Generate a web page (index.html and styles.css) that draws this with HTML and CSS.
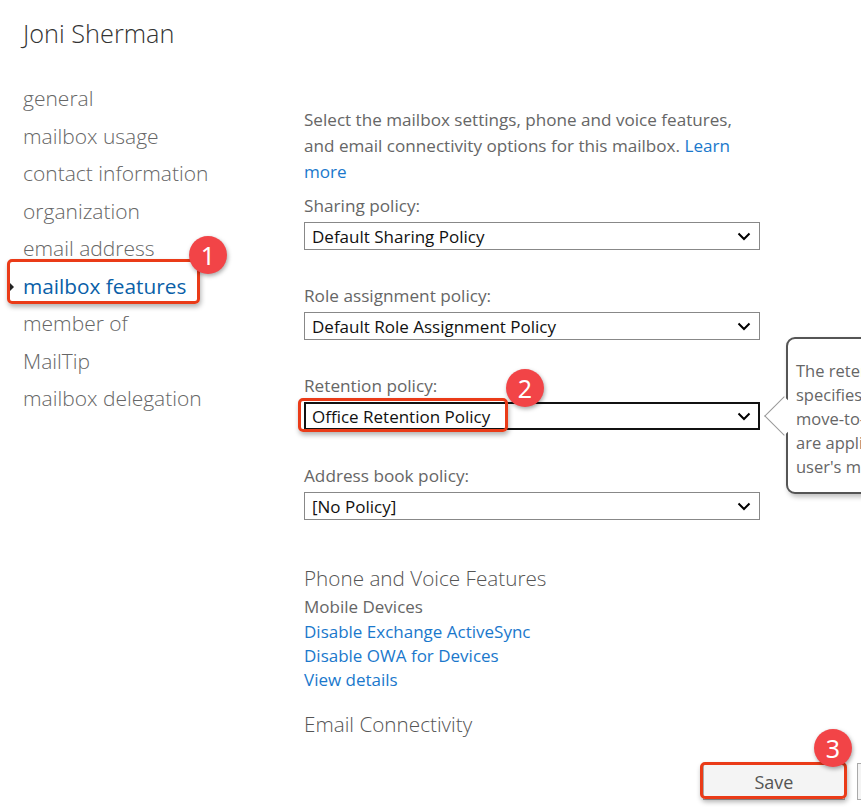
FILE: index.html
```html
<!DOCTYPE html>
<html>
<head>
<meta charset="utf-8">
<link rel="stylesheet" href="styles.css">
</head>
<body>
<div class="page">
  <h1 class="title">Joni Sherman</h1>
  <div class="columns">
    <nav class="nav">
      <div class="nav-item">general</div>
      <div class="nav-item">mailbox usage</div>
      <div class="nav-item">contact information</div>
      <div class="nav-item">organization</div>
      <div class="nav-item">email address</div>
      <div class="nav-item active"><span class="caret"></span>mailbox features</div>
      <div class="nav-item">member of</div>
      <div class="nav-item">MailTip</div>
      <div class="nav-item">mailbox delegation</div>
    </nav>
    <main class="content">
      <p class="desc">Select the mailbox settings, phone and voice features, and email connectivity options for this mailbox. <a class="link">Learn more</a></p>
      <div class="field">
        <div class="label">Sharing policy:</div>
        <div class="select"><span>Default Sharing Policy</span><svg class="chev" viewBox="0 0 14 9" width="14" height="9"><path d="M1.5 1.5 L7 7 L12.5 1.5" fill="none" stroke="#000" stroke-width="2"/></svg></div>
      </div>
      <div class="field">
        <div class="label">Role assignment policy:</div>
        <div class="select"><span>Default Role Assignment Policy</span><svg class="chev" viewBox="0 0 14 9" width="14" height="9"><path d="M1.5 1.5 L7 7 L12.5 1.5" fill="none" stroke="#000" stroke-width="2"/></svg></div>
      </div>
      <div class="field">
        <div class="label">Retention policy:</div>
        <div class="select focused"><span>Office Retention Policy</span><svg class="chev" viewBox="0 0 14 9" width="14" height="9"><path d="M1.5 1.5 L7 7 L12.5 1.5" fill="none" stroke="#000" stroke-width="2"/></svg></div>
      </div>
      <div class="field">
        <div class="label">Address book policy:</div>
        <div class="select"><span>[No Policy]</span><svg class="chev" viewBox="0 0 14 9" width="14" height="9"><path d="M1.5 1.5 L7 7 L12.5 1.5" fill="none" stroke="#000" stroke-width="2"/></svg></div>
      </div>
      <h2 class="section">Phone and Voice Features</h2>
      <div class="sub">Mobile Devices</div>
      <a class="link block">Disable Exchange ActiveSync</a>
      <a class="link block">Disable OWA for Devices</a>
      <a class="link block">View details</a>
      <h2 class="section second">Email Connectivity</h2>
    </main>
  </div>
  <div class="footer">
    <button class="btn">Save</button>
    <button class="btn">Cancel</button>
  </div>
</div>

<div class="tooltip">
  <span class="tip-arrow"></span>
  <p>The retention policy<br>specifies the retention and<br>move-to-archive policies that<br>are applied to this<br>user's mailbox.</p>
</div>

<div class="hl hl1"></div>
<div class="hl hl2"></div>
<div class="hl hl3"></div>
<div class="badge b1">1</div>
<div class="badge b2">2</div>
<div class="badge b3">3</div>
</body>
</html>
```
FILE: styles.css
```css
html, body {
  margin: 0;
  padding: 0;
  background: #fff;
  overflow: hidden;
}
body {
  width: 861px;
  height: 809px;
  position: relative;
  font-family: "Open Sans", "Noto Sans", sans-serif;
}
.page {
  padding: 15px 0 0 23px;
}
.title {
  margin: 0;
  font-size: 25.3px;
  font-weight: 300;
  color: #333;
  line-height: 36px;
}
.columns {
  display: flex;
  margin-top: 29px;
}
.nav {
  width: 281px;
  flex: none;
}
.nav-item {
  font-size: 21px;
  font-weight: 300;
  color: #666;
  line-height: 37.5px;
  height: 37.5px;
  white-space: nowrap;
  position: relative;
}
.nav-item.active {
  color: #0a5fa8;
  font-weight: 400;
  font-size: 20.8px;
}
.caret {
  position: absolute;
  left: -14px;
  top: 14px;
  width: 0;
  height: 0;
  border-top: 5px solid transparent;
  border-bottom: 5px solid transparent;
  border-left: 5px solid #222;
}
.content {
  width: 456px;
  flex: none;
  padding-top: 27px;
}
.desc {
  margin: 0;
  font-size: 17.1px;
  line-height: 26px;
  color: #666;
}
.link {
  color: #1a78cc;
  text-decoration: none;
}
.link.block {
  display: block;
  font-size: 17px;
  line-height: 24px;
}
.field {
  margin-top: 8px;
}
.field + .field {
  margin-top: 33px;
}
.label {
  font-size: 17.2px;
  line-height: 26px;
  color: #666;
}
.select {
  margin-top: 3px;
  height: 28px;
  box-sizing: border-box;
  border: 1px solid #888;
  display: flex;
  align-items: center;
  justify-content: space-between;
  padding: 0 8px 0 7px;
  font-size: 17px;
  color: #111;
}
.select.focused {
  border: 2px solid #111;
  padding-left: 6px;
  padding-right: 7px;
}
.chev {
  display: block;
}
.section {
  margin: 43px 0 0 0;
  font-size: 20.7px;
  font-weight: 300;
  color: #555;
  line-height: 30px;
}
.section.second {
  margin-top: 17px;
}
.sub {
  font-size: 17px;
  line-height: 24px;
  color: #666;
  margin: 2px 0 1px 0;
}
.footer {
  display: flex;
  gap: 12px;
  padding-left: 680px;
  margin-top: 24px;
}
.btn {
  flex: none;
  width: 142px;
  height: 37px;
  border: 1px solid #aaa;
  background: #f4f4f4;
  font-family: inherit;
  font-size: 18px;
  color: #555;
}
.tooltip {
  position: absolute;
  left: 786px;
  top: 337px;
  width: 260px;
  height: 157px;
  box-sizing: border-box;
  border: 2px solid #555;
  border-radius: 9px;
  background: #fff;
  box-shadow: 2px 3px 5px rgba(0,0,0,0.25);
  padding: 20px 0 0 8px;
}
.tooltip p {
  position: relative;
  margin: 0;
  font-size: 16.5px;
  line-height: 24px;
  color: #666;
  white-space: nowrap;
}
.tip-arrow {
  position: absolute;
  left: -18px;
  top: 63px;
  width: 28px;
  height: 28px;
  box-sizing: border-box;
  background: #fff;
  border-left: 1px solid #999;
  border-bottom: 1px solid #999;
  transform: rotate(45deg);
}
.hl {
  position: absolute;
  border: 3px solid #ea3b18;
  border-radius: 5px;
  box-shadow: 1px 3px 5px rgba(0,0,0,0.3);
}
.hl1 { left: 7px; top: 259px; width: 187px; height: 39px; }
.hl2 { left: 298px; top: 398px; width: 204px; height: 28px; }
.hl3 { left: 700px; top: 762px; width: 141px; height: 31px; }
.badge {
  position: absolute;
  width: 38px;
  height: 38px;
  border-radius: 50%;
  background: #f24447;
  color: #fff;
  font-size: 25px;
  line-height: 38px;
  text-align: center;
  box-shadow: 1px 2px 4px rgba(0,0,0,0.35);
  font-family: "Noto Sans", sans-serif;
}
.b1 { left: 189px; top: 236px; }
.b2 { left: 506px; top: 369px; }
.b3 { left: 814px; top: 729px; }
```
